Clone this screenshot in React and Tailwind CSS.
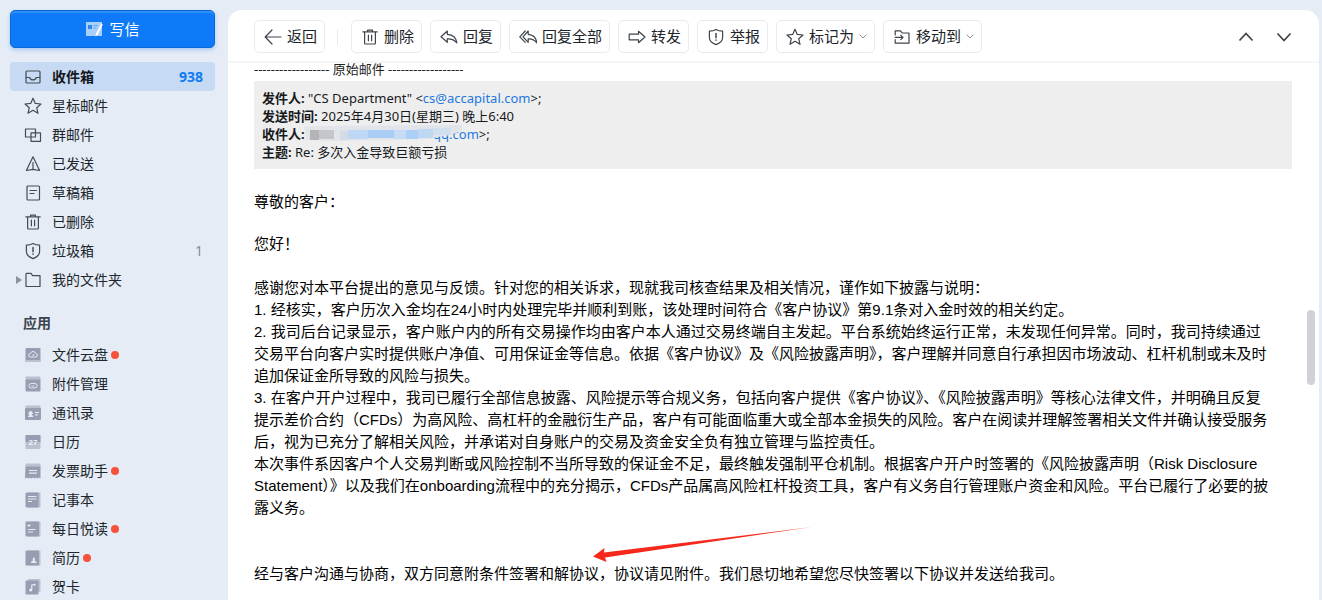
const line = { fill: 'none', stroke: 'currentColor', strokeWidth: 1.2, strokeLinejoin: 'round', strokeLinecap: 'round' };

const icons = {
  inbox: <g {...line}><rect x="2" y="3" width="14" height="12" rx="1" /><path d="M2 9.500h3.600c.5 1.600 1.800 2.400 3.400 2.400s2.900-.8 3.400-2.400H16" /></g>,
  star: <path {...line} d="M9 1.200l2.300 5.200 5.700.6-4.300 3.700 1.300 5.600L9 13.300l-5 3 1.300-5.600L1 7l5.700-.6z" />,
  group: <g {...line}><path d="M1.500 3h10v8h-10z" /><path d="M7 6.800h9.500v8.500H7z" /></g>,
  sent: <g {...line}><path d="M9 1.800l6.600 13.700L9 14.300l-6.600 1.200z" /><path d="M9 7.500v6.800" /></g>,
  draft: <g {...line}><rect x="3" y="2" width="12.500" height="14" rx="1" /><path d="M6 6.500h6.500M6 9.500h4" /></g>,
  trash: <g {...line}><path d="M1.800 3.800h14.400M6.500 3.600V2.200h5v1.400M3.600 4v11.200c0 .5.300.8.800.8h9.200c.5 0 .8-.3.800-.8V4M7.400 7.200v5.600M10.600 7.200v5.600" /></g>,
  shield: <g {...line}><path d="M9 1.500c2 1.200 4.200 1.700 6.600 1.700v6.300c0 3.300-3 5.800-6.600 7.100-3.600-1.300-6.600-3.800-6.600-7.100V3.200c2.400 0 4.600-.5 6.600-1.700z" /><path strokeWidth="1.500" d="M9 5.500v4.300M9 12v.3" /></g>,
  folder: <path {...line} d="M2 15.500V3.200c0-.5.300-.8.800-.8H7l1.600 2.200h7.400v10.900z" />,
  back: <path {...line} d="M17 9H1.500M8 2L1.200 9 8 16" />,
  reply: <path {...line} d="M7.300 3L1 8.800l6.300 5.500v-3.400c4.200-.2 7.200 1 9.600 4-.7-5-4-8.200-9.600-8.600z" />,
  replyAll: <g {...line}><path d="M9.200 3L4 8.800l5.200 5.500v-3.400c3.600-.2 6.400 1 8.600 4-.6-5-3.400-8.200-8.600-8.600z" /><path d="M6.200 3L.8 8.800l5.400 5.500" /></g>,
  forward: <path {...line} d="M1.200 6.200h9.300V3.300L17 9l-6.500 5.700v-2.900H1.200z" />,
  move: <g {...line}><path d="M2.200 7V2.800h5.300l1.700 2.200H16v10.200H2.200v-3.500" /><path d="M2.200 9.400h7.600M7.800 7.200L10 9.400l-2.200 2.200" /></g>,
  cloud: <g><rect x="1.500" y="2" width="15" height="14" rx="1" fill="#979eb1" /><path d="M1.500 14h15v1a1 1 0 0 1-1 1h-13a1 1 0 0 1-1-1z" fill="#bac1cf" /><path d="M6.300 11a1.700 1.700 0 0 1 .1-3.500 2.700 2.700 0 0 1 5.200 0 1.700 1.700 0 0 1 .1 3.500zM8.500 10l1.500-2" fill="none" stroke="#e5ecf5" /></g>,
  attach: <g><path d="M1.500 2.500a1 1 0 0 1 1-1h13a1 1 0 0 1 1 1V6h-15z" fill="#bac1cf" /><rect x="1.500" y="4.500" width="15" height="12" rx="1" fill="#979eb1" /><path d="M9.500 13H7.200a2.200 2.200 0 0 1 0-4.500h3.600a2.200 2.200 0 0 1 0 4.500c-1.800 0-2.800-2.600-.6-2.600M7.400 10.800h.6" fill="none" stroke="#e5ecf5" /></g>,
  contacts: <g><path d="M1.500 1.500h15v4h-15z" fill="#bac1cf" /><rect x="1" y="4" width="16" height="12" rx="1" fill="#979eb1" /><path d="M4 13v-1l1.800-1a2 2 0 1 1 1.600 0l1.800 1v1zM11 8h4v1h-4zM11 10.500h3v1h-3z" fill="#e5ecf5" /></g>,
  calendar: <g><rect x="1.500" y="2" width="15" height="14" rx="1" fill="#bac1cf" /><path d="M1.500 3a1 1 0 0 1 1-1h13a1 1 0 0 1 1 1v6h-15z" fill="#979eb1" /><text x="9" y="12.300" textAnchor="middle" fontSize="8" fontWeight="700" fontFamily="Liberation Sans, sans-serif" fill="#f0f4fa">27</text></g>,
  invoice: <g><path d="M1.500 1.500h15V6h-15z" fill="#bac1cf" /><path d="M1.500 4.500h15V16.500l-1.500-1-1.500 1-1.500-1-1.500 1-1.500-1-1.500 1-1.500-1-1.500 1-1.500-1-2 1z" fill="#979eb1" /><path d="M5 8.500h8M5 11.200h8" stroke="#e5ecf5" strokeWidth="1.200" /></g>,
  notes: <g><rect x="4" y="1.500" width="12.500" height="15" rx="1" fill="#bac1cf" /><rect x="1.500" y="1.500" width="13" height="15" rx="1" fill="#979eb1" /><path d="M4 5.500h8.500M4 8h8.500M4 10.500h4" stroke="#e5ecf5" /></g>,
  daily: <g><rect x="4" y="1.500" width="12.500" height="15" rx="1" fill="#bac1cf" /><rect x="1.500" y="1.500" width="13.500" height="15" rx="1" fill="#979eb1" /><path d="M3.500 5.500h3M5 4v3M4 9.500h7.500M4 12h5" stroke="#e5ecf5" /></g>,
  resume: <g><rect x="4" y="1.500" width="12.500" height="15" rx="1" fill="#bac1cf" /><rect x="1.500" y="1.500" width="13.500" height="15" rx="1" fill="#979eb1" /><path d="M7 14v-1.200l1.800-.8V9.500a1 1 0 0 1 2 0V12l1.700.8V14z" fill="#e5ecf5" /></g>,
  cards: <g><rect x="4" y="1" width="12.500" height="13" rx="1" fill="#bac1cf" /><rect x="1.500" y="2.500" width="13" height="14" rx="1" fill="#979eb1" /><path d="M7.800 12V7l3-.6v1.500" fill="none" stroke="#e5ecf5" strokeWidth="1.200" /><circle cx="6.600" cy="12" r="1.500" fill="#e5ecf5" /></g>,
};

function Icon({ name }) {
  return (
    <svg aria-hidden="true" viewBox="0 0 18 18" className="size-[18px] shrink-0">
      {icons[name]}
    </svg>
  );
}

const folders = [
  { icon: 'inbox', label: '收件箱', count: '938', active: true },
  { icon: 'star', label: '星标邮件' },
  { icon: 'group', label: '群邮件' },
  { icon: 'sent', label: '已发送' },
  { icon: 'draft', label: '草稿箱' },
  { icon: 'trash', label: '已删除' },
  { icon: 'shield', label: '垃圾箱', count: '1' },
  { icon: 'folder', label: '我的文件夹', expandable: true },
];

const apps = [
  { icon: 'cloud', label: '文件云盘', dot: true },
  { icon: 'attach', label: '附件管理' },
  { icon: 'contacts', label: '通讯录' },
  { icon: 'calendar', label: '日历' },
  { icon: 'invoice', label: '发票助手', dot: true },
  { icon: 'notes', label: '记事本' },
  { icon: 'daily', label: '每日悦读', dot: true },
  { icon: 'resume', label: '简历', dot: true },
  { icon: 'cards', label: '贺卡' },
];

const actions = [
  { icon: 'trash', label: '删除' },
  { icon: 'reply', label: '回复' },
  { icon: 'replyAll', label: '回复全部' },
  { icon: 'forward', label: '转发' },
  { icon: 'shield', label: '举报' },
  { icon: 'star', label: '标记为', menu: true },
  { icon: 'move', label: '移动到', menu: true },
];

const notice = [
  '感谢您对本平台提出的意见与反馈。针对您的相关诉求，现就我司核查结果及相关情况，谨作如下披露与说明：',
  '1. 经核实，客户历次入金均在24小时内处理完毕并顺利到账，该处理时间符合《客户协议》第9.1条对入金时效的相关约定。',
  '2. 我司后台记录显示，客户账户内的所有交易操作均由客户本人通过交易终端自主发起。平台系统始终运行正常，未发现任何异常。同时，我司持续通过',
  '交易平台向客户实时提供账户净值、可用保证金等信息。依据《客户协议》及《风险披露声明》，客户理解并同意自行承担因市场波动、杠杆机制或未及时',
  '追加保证金所导致的风险与损失。',
  '3. 在客户开户过程中，我司已履行全部信息披露、风险提示等合规义务，包括向客户提供《客户协议》、《风险披露声明》等核心法律文件，并明确且反复',
  '提示差价合约（CFDs）为高风险、高杠杆的金融衍生产品，客户有可能面临重大或全部本金损失的风险。客户在阅读并理解签署相关文件并确认接受服务',
  '后，视为已充分了解相关风险，并承诺对自身账户的交易及资金安全负有独立管理与监控责任。',
  '本次事件系因客户个人交易判断或风险控制不当所导致的保证金不足，最终触发强制平仓机制。根据客户开户时签署的《风险披露声明（Risk Disclosure',
  'Statement）》以及我们在onboarding流程中的充分揭示，CFDs产品属高风险杠杆投资工具，客户有义务自行管理账户资金和风险。平台已履行了必要的披',
  '露义务。',
];

function NavItem({ icon, label, count, active, dot, expandable }) {
  return (
    <li>
      <a
        href="#"
        className={
          'flex h-[29px] items-center rounded-[4px] pr-3 text-[14px] ' +
          (active ? 'bg-[#c6daf3] font-bold text-[#14181d]' : 'text-[#20262d]')
        }
      >
        <span className="flex w-[14px] shrink-0 justify-center pl-1">
          {expandable && (
            <svg aria-hidden="true" viewBox="0 0 6 8" className="h-2 w-[6px]"><path d="M0 0l6 4-6 4z" fill="#8b939d" /></svg>
          )}
        </span>
        <span className="text-[#454c54]"><Icon name={icon} /></span>
        <span className="ml-[10px]">{label}</span>
        {dot && <span className="ml-[3px] size-2 rounded-full bg-[#f7503b]" />}
        {count && (
          <span className={'ml-auto ' + (active ? 'text-[#0f7af5]' : 'text-[#858c95]')}>{count}</span>
        )}
      </a>
    </li>
  );
}

function ToolButton({ icon, label, menu }) {
  return (
    <button className="flex h-[33px] shrink-0 items-center gap-[5px] rounded-[5px] border border-[#e6ebf0] bg-white pr-[7px] pl-[9px] text-[15px] text-[#20242a]">
      <span className="text-[#3f454c]"><Icon name={icon} /></span>
      <span>{label}</span>
      {menu && (
        <svg aria-hidden="true" viewBox="0 0 8 5" className="h-[5px] w-2 shrink-0"><path d="M.6.6L4 4 7.400.6" fill="none" stroke="#8d9399" /></svg>
      )}
    </button>
  );
}

function Sidebar() {
  return (
    <aside className="w-[228px] shrink-0 py-[10px] pr-[13px] pl-[10px]">
      <button className="flex h-[38px] w-full items-center justify-center gap-[6px] rounded-[5px] border border-[#0b67d6] bg-[#0f7af8] text-[15px] text-white shadow-[0_2px_4px_rgba(15,122,248,0.3),inset_0_2px_1px_#2f90fb]">
        <svg aria-hidden="true" viewBox="0 0 18 16" className="h-4 w-[18px]">
          <path d="M1 1h16v14H1z" fill="#a9d0fb" />
          <path d="M3 4h4v4H3z" fill="#2d87ee" />
          <path d="M8.500 4.500h4.500M8.500 7h3" stroke="#5fa6f5" />
          <path d="M16.200 2.500l1.600 1-5 10-2.400 2 .6-3z" fill="#fff" />
        </svg>
        写信
      </button>
      <nav aria-label="邮箱" className="mt-[14px]">
        <ul>{folders.map((item) => <NavItem key={item.label} {...item} />)}</ul>
        <h2 className="mt-[19px] mb-[7px] pl-[13px] text-[14px] leading-[20px] font-bold text-[#3b434c]">应用</h2>
        <ul>{apps.map((item) => <NavItem key={item.label} {...item} />)}</ul>
      </nav>
    </aside>
  );
}

function MaskedAddress() {
  return (
    <span className="relative">
      <span className="inline-block w-[125px]" />
      <a href="#" className="text-[#1f78e0]">qq.com</a>&gt;;
      <svg aria-hidden="true" viewBox="0 0 160 18" className="absolute top-0 -left-1 h-[18px] w-[160px]">
        <path d="M0 2l12-1 146-1v6l-12 4-12 2-10 2-94 2-27-1z" fill="#e1e4e8" />
        <path d="M6 5h9v10H6z" fill="#b4b4b7" />
        <path d="M15 5h15v9H15z" fill="#c5c6c9" />
        <path d="M36 6h8v9h-8z" fill="#d5dbe5" />
        <path d="M44 5h20v9H44z" fill="#bdd7f5" />
        <path d="M64 5h26v8H64z" fill="#a9cdf5" />
        <path d="M90 5h12v9H90z" fill="#c6dcf5" />
        <path d="M102 5h12v9h-12z" fill="#abcff7" />
        <path d="M114 4h15v9h-15z" fill="#bfd8f2" />
        <path d="M129 3h18v7h-18z" fill="#d0dfed" />
      </svg>
    </span>
  );
}

export default function App() {
  return (
    <div className="flex h-screen overflow-hidden bg-[#e5ecf5] font-['Noto_Sans','Noto_Sans_CJK_SC',sans-serif]">
      <Sidebar />
      <main className="relative mt-[10px] mr-[3px] flex min-w-0 flex-1 flex-col overflow-hidden rounded-t-[14px] bg-white">
        <div className="flex h-[53px] shrink-0 items-center gap-2 border-b-2 border-[#f5f6f8] pt-[2px] pr-[26px] pl-[26px]">
          <ToolButton icon="back" label="返回" />
          <span className="mr-[5px] ml-1 h-4 w-px bg-[#e8ebee]" />
          {actions.map((item) => <ToolButton key={item.label} {...item} />)}
          <div className="ml-auto flex gap-5">
            <button aria-label="上一封" className="text-[#3f4449]">
              <svg aria-hidden="true" viewBox="0 0 18 18" className="size-[18px]"><path d="M2.500 12.500L9 5.500l6.500 7" fill="none" stroke="currentColor" strokeWidth="1.700" /></svg>
            </button>
            <button aria-label="下一封" className="text-[#3f4449]">
              <svg aria-hidden="true" viewBox="0 0 18 18" className="size-[18px]"><path d="M2.500 5.500l6.500 7 6.500-7" fill="none" stroke="currentColor" strokeWidth="1.700" /></svg>
            </button>
          </div>
        </div>
        <article className="relative min-h-0 flex-1 pr-[27px] pl-[26px] text-black">
          <p className="h-[18px] text-[13px] leading-[12px] text-[#222]">------------------ 原始邮件 ------------------</p>
          <div className="bg-[#eeeeee] p-2 text-[13px] leading-[18px] text-[#16191c]">
            <p><b>发件人:</b> "CS Department" &lt;<a href="#" className="text-[#1f78e0]">cs@accapital.com</a>&gt;;</p>
            <p><b>发送时间:</b> 2025年4月30日(星期三) 晚上6:40</p>
            <p><b>收件人:</b> <MaskedAddress /></p>
            <p><b>主题:</b> Re: 多次入金导致巨额亏损</p>
          </div>
          <div className="pt-[22px] font-['Liberation_Sans','Noto_Sans_CJK_SC',sans-serif] text-[15px] leading-[22px]">
            <p className="mb-5">尊敬的客户：</p>
            <p className="mb-[22px]">您好！</p>
            <p>{notice.map((text) => <span key={text}>{text}<br /></span>)}</p>
            <p className="mt-11">经与客户沟通与协商，双方同意附条件签署和解协议，协议请见附件。我们恳切地希望您尽快签署以下协议并发送给我司。</p>
          </div>
          <svg aria-hidden="true" viewBox="0 0 220 36" className="absolute top-[463px] left-[365px] h-9 w-[220px]">
            <path d="M0 30.500L11.500 22l-.5 4.500L219 1 12 31.500l1.500 4.500z" fill="#f5291b" />
          </svg>
        </article>
        <div className="absolute top-[300px] right-1 h-[75px] w-2 rounded-full bg-[#d1d2d8]" />
      </main>
    </div>
  );
}
